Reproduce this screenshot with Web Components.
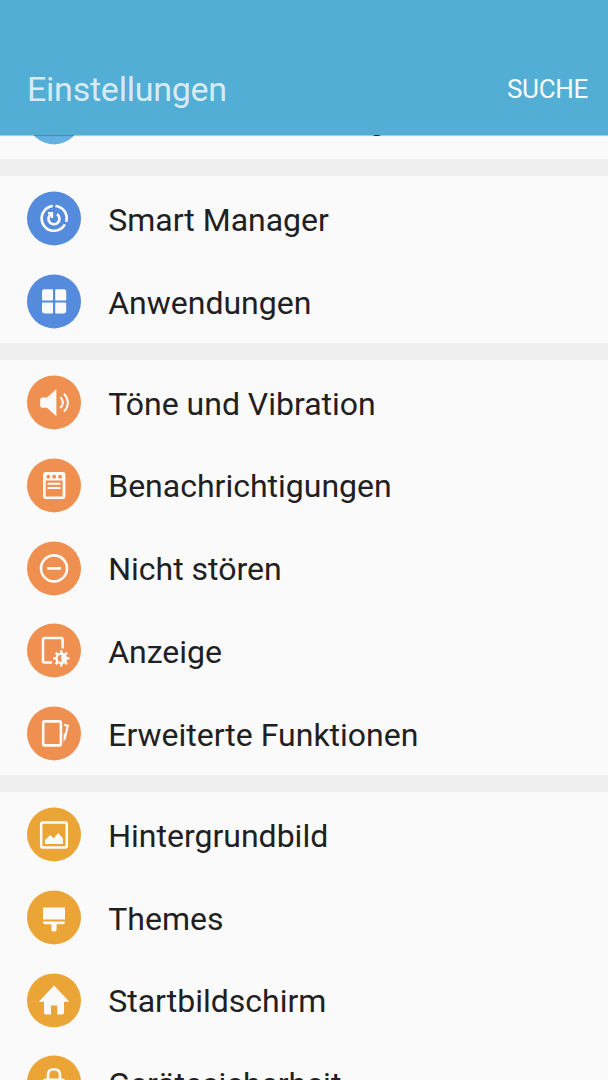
<!DOCTYPE html>
<html lang="de">
<head>
<meta charset="utf-8">
<title>Einstellungen</title>
<style>
html,body{margin:0;height:100%;overflow:hidden;background:#fafafa}
body{font-family:Roboto,"Noto Sans",sans-serif;color:#1f2022}
</style>
</head>
<body>
<settings-screen></settings-screen>
<script>
const ICONS = {
  more: '<circle cx="18" cy="27" r="2.5"/><circle cx="27" cy="27" r="2.5"/><circle cx="36" cy="27" r="2.5"/>',
  manager: '<g fill="none" stroke="#fafafa" stroke-width="2.7"><path d="M25.8 14.6A12.4 12.4 0 1 0 37.9 33M39.2 30.4A12.4 12.4 0 0 0 28.4 14.6"/><path d="M30 22.8A5.5 5.5 0 1 1 23.6 23"/><path d="M21 21.6H25V26.6" stroke-width="2.2"/></g>',
  apps: '<path d="M17.4 14.8H25.3Q26 14.8 26 15.5V25.3Q26 26 25.3 26H15.7Q15 26 15 25.3V17.2Q15 14.8 17.4 14.8ZM28.9 14.8H36.8Q39.2 14.8 39.2 17.2V25.3Q39.2 26 38.5 26H28.9Q28.2 26 28.2 25.3V15.5Q28.2 14.8 28.9 14.8ZM15.7 28H25.3Q26 28 26 28.7V38.3Q26 39 25.3 39H17.4Q15 39 15 36.6V28.7Q15 28 15.7 28ZM28.9 28H38.5Q39.2 28 39.2 28.7V36.6Q39.2 39 36.8 39H28.9Q28.2 39 28.2 38.3V28.7Q28.2 28 28.9 28Z"/>',
  sound: '<path d="M13.2 24Q13.2 22 15.2 22H20L29.4 13.7V40.8L20 32.3H15.2Q13.2 32.3 13.2 30.3Z"/><g fill="none" stroke="#fafafa" stroke-width="2"><path d="M33.4 21.8Q38.2 27.3 33.4 32.6M37 18.2Q44.8 27.3 37 36.2"/></g>',
  notes: '<path fill-rule="evenodd" d="M18.4 13.6H36Q38.4 13.6 38.4 15.8V38.2Q38.4 40.5 36 40.5H18.4Q16 40.5 16 38.2V15.8Q16 13.6 18.4 13.6ZM18.7 22V38H35.6V22Z"/><g fill="#ef9050"><circle cx="21.3" cy="18.3" r="1.9"/><circle cx="27.2" cy="18.3" r="1.9"/><circle cx="33.1" cy="18.3" r="1.9"/></g><path d="M20.5 25.3H33.5M20.5 29.6H33.5" stroke="#fafafa" stroke-width="2.1"/>',
  dnd: '<circle cx="27" cy="27" r="13" fill="none" stroke="#fafafa" stroke-width="2.6"/><path d="M20.2 27H34" stroke="#fafafa" stroke-width="2.7"/>',
  display: '<path d="M25 39.1H17.4Q16 39.1 16 37.7V16.2Q16 14.7 17.4 14.7H34.2Q35.6 14.7 35.6 16.2V25" fill="none" stroke="#fafafa" stroke-width="2.5"/><g stroke="#fafafa" stroke-width="2.4"><path d="M34.3 26.8V43.2M26.1 35H42.5M28.6 29.3L40 40.7M40 29.3L28.6 40.7"/></g><circle cx="34.3" cy="35" r="5.9"/><path d="M34.3 31.4A3.6 3.6 0 0 0 34.3 38.6Z" fill="#ef9050"/>',
  cards: '<rect x="16.2" y="15" width="17.7" height="24" rx="1.4" fill="none" stroke="#fafafa" stroke-width="2.6"/><path d="M37 18.3L40.8 19.4L37.6 33" fill="none" stroke="#fafafa" stroke-width="2.2"/><path d="M36.7 27L39.2 27L36.7 36.5Z"/>',
  picture: '<rect x="14.2" y="15" width="25.6" height="25" rx="1.6" fill="none" stroke="#fafafa" stroke-width="2.5"/><path d="M18 36.7V32.8L23.1 27.7L26.7 30.8L31.2 25.7L36 31V36.7Z"/>',
  brush: '<path d="M16 17.2H38V29H16ZM16 31H38V32Q38 33.8 36 33.8H29.6V38.5A2.6 2.6 0 0 1 24.4 38.5V33.8H18Q16 33.8 16 32Z"/>',
  home: '<path d="M27 12.2L42.4 28.4H37V38.6Q37 41.2 34.4 41.2H30.3V32H24V41.2H19.5Q17 41.2 17 38.6V28.4H11.8Z"/>',
  lock: '<path d="M21 25V19.4Q21 13.8 27 13.8Q33 13.8 33 19.4V25" fill="none" stroke="#fafafa" stroke-width="2.6"/><rect x="16" y="23" width="22" height="17" rx="2"/>'
};

function mount(host, html) {
  host.attachShadow({mode: 'open'}).innerHTML = html;
}

customElements.define('settings-icon', class extends HTMLElement {
  connectedCallback() {
    mount(this, `<style>:host{display:block;width:54px;height:54px;flex:none}svg{display:block;overflow:visible}.disc{fill:var(--tint)}</style>
      <svg width="54" height="54" viewBox="0 0 54 54" fill="#fafafa" aria-hidden="true"><g transform="translate(0 .4)"><circle class="disc" cx="27" cy="27" r="27"/>${ICONS[this.getAttribute('name')]}</g></svg>`);
  }
});

customElements.define('settings-row', class extends HTMLElement {
  connectedCallback() {
    mount(this, `<style>:host{display:flex;align-items:center;height:82.75px;padding-left:27px;gap:27.2px;box-sizing:border-box;font-size:32px;white-space:nowrap}
      span{line-height:40px;padding-top:3.3px}</style>
      <settings-icon name="${this.getAttribute('icon')}"></settings-icon><span><slot></slot></span>`);
  }
});

customElements.define('settings-group', class extends HTMLElement {
  connectedCallback() {
    mount(this, `<style>:host{display:block;padding:.7px 0;border-bottom:17px solid #efefef}</style><slot></slot>`);
  }
});

customElements.define('settings-header', class extends HTMLElement {
  connectedCallback() {
    mount(this, `<style>:host{display:flex;justify-content:space-between;align-items:flex-end;height:135px;box-sizing:border-box;padding:0 20px 26px 27px;background:#52aed5;box-shadow:0 1px 1px rgba(0,0,0,.22);position:relative;z-index:1;flex:none}
      h1{margin:0;font-weight:400;font-size:34px;letter-spacing:-.24px;line-height:40px;color:#d8ebf4}
      button{all:unset;font-size:26px;letter-spacing:-.3px;line-height:40px;color:#fafafa}</style>
      <h1><slot></slot></h1><button><slot name="action"></slot></button>`);
  }
});

customElements.define('settings-screen', class extends HTMLElement {
  connectedCallback() {
    mount(this, `<style>
      :host{display:flex;flex-direction:column;height:1080px;overflow:hidden;background:#fafafa}
      main{flex:1;min-height:0;overflow:hidden}
      .list{margin-top:-60px}
      .sky{--tint:#63b1e2}.blue{--tint:#548bdc}.orange{--tint:#ef9050}.amber{--tint:#eba536}
    </style>
    <settings-header>Einstellungen<span slot="action">SUCHE</span></settings-header>
    <main><div class="list">
      <settings-group class="sky">
        <settings-row icon="more">Weitere Verbindungen</settings-row>
      </settings-group>
      <settings-group class="blue">
        <settings-row icon="manager">Smart Manager</settings-row>
        <settings-row icon="apps">Anwendungen</settings-row>
      </settings-group>
      <settings-group class="orange">
        <settings-row icon="sound">Töne und Vibration</settings-row>
        <settings-row icon="notes">Benachrichtigungen</settings-row>
        <settings-row icon="dnd">Nicht stören</settings-row>
        <settings-row icon="display">Anzeige</settings-row>
        <settings-row icon="cards">Erweiterte Funktionen</settings-row>
      </settings-group>
      <settings-group class="amber">
        <settings-row icon="picture">Hintergrundbild</settings-row>
        <settings-row icon="brush">Themes</settings-row>
        <settings-row icon="home">Startbildschirm</settings-row>
        <settings-row icon="lock">Gerätesicherheit</settings-row>
      </settings-group>
    </div></main>`);
  }
});
</script>
</body>
</html>
